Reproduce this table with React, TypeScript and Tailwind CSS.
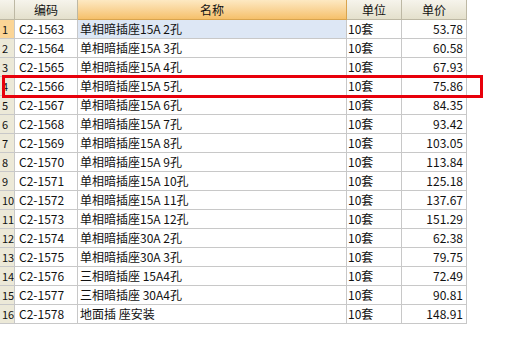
import React from 'react';

const rows: [string, string, string, string][] = [
  ['C2-1563', '单相暗插座15A 2孔', '10套', '53.78'],
  ['C2-1564', '单相暗插座15A 3孔', '10套', '60.58'],
  ['C2-1565', '单相暗插座15A 4孔', '10套', '67.93'],
  ['C2-1566', '单相暗插座15A 5孔', '10套', '75.86'],
  ['C2-1567', '单相暗插座15A 6孔', '10套', '84.35'],
  ['C2-1568', '单相暗插座15A 7孔', '10套', '93.42'],
  ['C2-1569', '单相暗插座15A 8孔', '10套', '103.05'],
  ['C2-1570', '单相暗插座15A 9孔', '10套', '113.84'],
  ['C2-1571', '单相暗插座15A 10孔', '10套', '125.18'],
  ['C2-1572', '单相暗插座15A 11孔', '10套', '137.67'],
  ['C2-1573', '单相暗插座15A 12孔', '10套', '151.29'],
  ['C2-1574', '单相暗插座30A 2孔', '10套', '62.38'],
  ['C2-1575', '单相暗插座30A 3孔', '10套', '79.75'],
  ['C2-1576', '三相暗插座 15A4孔', '10套', '72.49'],
  ['C2-1577', '三相暗插座 30A4孔', '10套', '90.81'],
  ['C2-1578', '地面插 座安装', '10套', '148.91'],
];

const cell = 'h-[19px] border-r border-b border-[#c8c8c8] flex items-center whitespace-nowrap overflow-hidden';
const head =
  'h-[20px] border-r border-b border-[#bdb8a4] flex items-center justify-center bg-gradient-to-b from-[#f6f4ec] to-[#e4e0cc]';

export default function App() {
  return (
    <div
      className="relative w-[510px] h-[339px] bg-white text-[12px] text-[#111] leading-none overflow-hidden"
      style={{ fontFamily: '"Noto Sans CJK SC", "Liberation Sans", sans-serif' }}
    >
      <div className="grid grid-cols-[15px_63px_269px_55px_65px] w-[467px]">
        <div className={head} />
        <div className={head}>编码</div>
        <div className="h-[20px] border-r border-b border-[#d9a44e] flex items-center justify-center bg-gradient-to-b from-[#fde9c2] to-[#f5c06a]">
          名称
        </div>
        <div className={head}>单位</div>
        <div className={head}>单价</div>

        {rows.map(([code, name, unit, price], i) => (
          <React.Fragment key={code}>
            <div
              className={`${cell} pl-[2px] text-[11px] ${
                i === 0 ? 'bg-[#fbd596]' : 'bg-[#ece9d8]'
              } border-[#c4c0ae]`}
            >
              {i + 1}
            </div>
            <div className={`${cell} pl-[4px]`}>{code}</div>
            <div className={`${cell} pl-[2px] ${i === 0 ? 'bg-[#dde7f5]' : ''}`}>{name}</div>
            <div className={`${cell} pl-[1px]`}>{unit}</div>
            <div className={`${cell} justify-end pr-[3px]`}>{price}</div>
          </React.Fragment>
        ))}
      </div>

      <div className="absolute left-[2px] top-[75px] w-[481px] h-[23px] border-[3px] border-[#e8000b]" />
    </div>
  );
}
